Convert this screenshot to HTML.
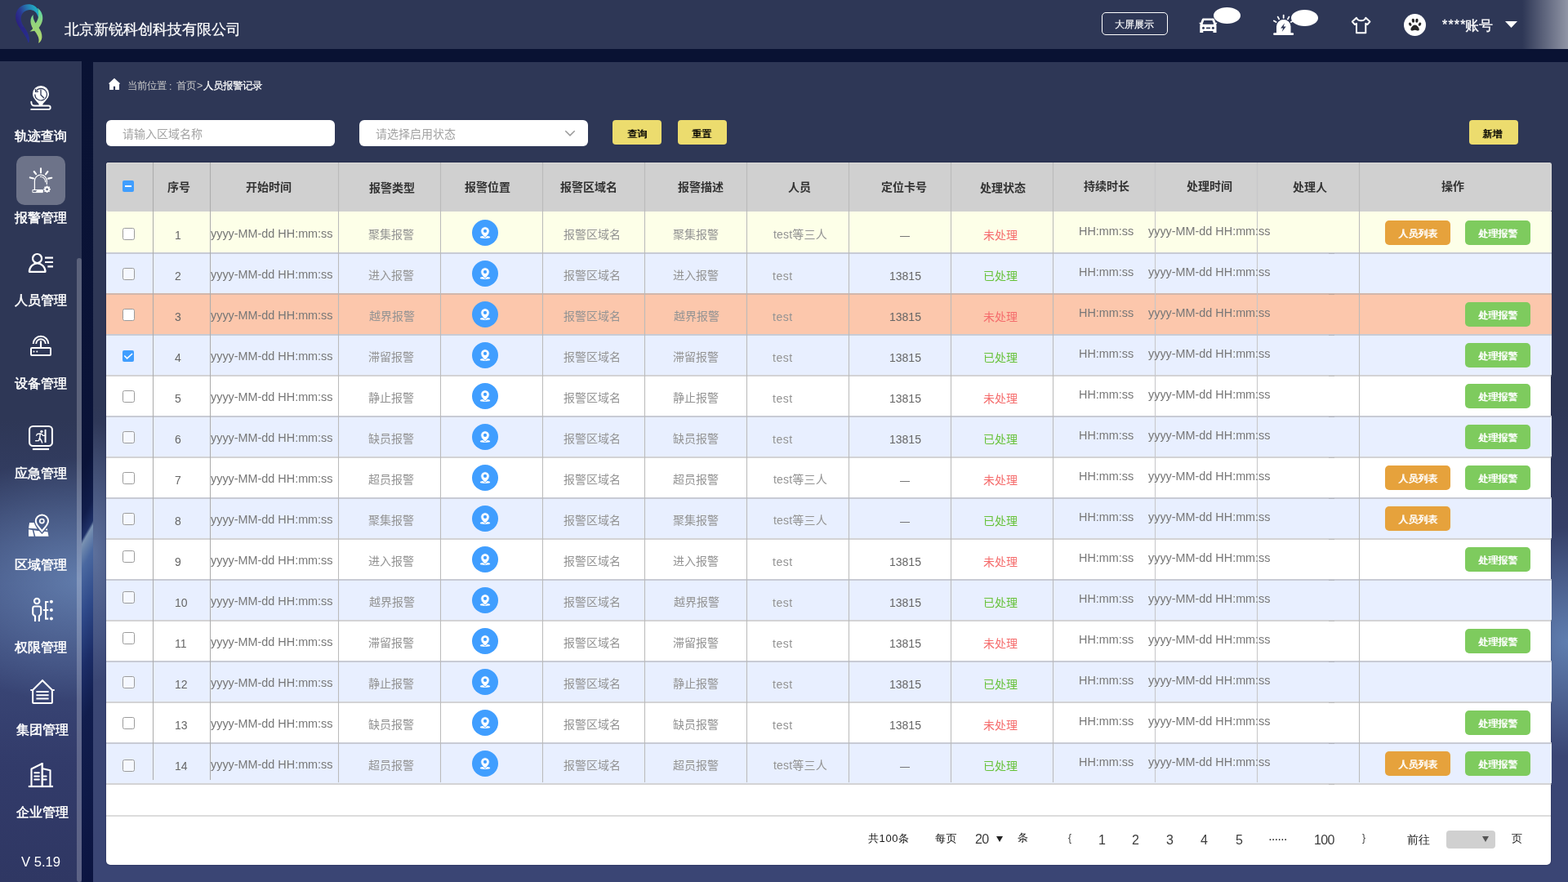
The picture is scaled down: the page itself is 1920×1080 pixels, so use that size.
<!DOCTYPE html>
<html lang="zh-CN">
<head>
<meta charset="utf-8">
<title>人员报警记录</title>
<style>
html,body{margin:0;padding:0;background:#091233;}
body{width:1920px;height:1080px;overflow:hidden;font-family:"Liberation Sans","Noto Sans CJK SC",sans-serif;}
#root{position:relative;width:1920px;height:1080px;overflow:hidden;background:#091233;will-change:transform;}
#root div,#root span,#root svg{position:absolute;box-sizing:border-box;}
.t{white-space:nowrap;}
.hdr{left:0;top:0;width:1920px;height:60px;background:#2e3756;}
.side{left:0;top:75px;width:100px;height:1005px;}
.main{left:114px;top:76px;width:1806px;height:1004px;}
.cl{width:1px;background:rgba(0,0,0,0.22);}
.row{left:130px;width:1770px;height:50px;}
.rb{left:130px;width:1770px;height:2px;}
.cb{width:15px;height:15px;border:1px solid #9b9b9b;border-radius:2.5px;background:#fff;left:150px;}
.loc{left:578px;width:32px;height:32px;}
.bo{left:1696px;width:80px;height:30px;border-radius:5px;background:#e6a23c;}
.bg{left:1794px;width:80px;height:30px;border-radius:5px;background:#7ecb5e;}
.by{top:147px;width:60px;height:30px;border-radius:4px;background:#ecdc6e;}
</style>
</head>
<body>
<div id="root">
<div style="left:100px;top:75px;width:14px;height:1005px;overflow:hidden;background:#091233"><div style="left:0;top:0;width:14px;height:1035px;transform-origin:0 0;transform:skewY(-60deg);background:linear-gradient(180deg,#091233 0,#0a1338 500px,#111d4b 560px,#1f3168 586px,#7a92b2 592px,#6a84ac 601px,#4a68a0 622px,#2f4a8a 680px,#1c2d67 745px,#111d4d 810px,#0b1440 1035px)"></div></div>
<div class="hdr"></div>
<div style="left:1864px;top:0;width:56px;height:60px;background:linear-gradient(90deg,rgba(255,255,255,0),rgba(255,255,255,.47))"></div>
<div class="side" style="background:radial-gradient(ellipse 230px 150px at 100px 635px,rgba(110,142,190,.72),rgba(110,142,190,0)),linear-gradient(180deg,#2e3756 0,#2e3756 440px,#343f66 540px,#3d4b7a 640px,#3a4777 740px,#323b6a 860px,#2f3763 1005px)"></div>
<div class="main" style="background:radial-gradient(ellipse 130px 140px at 1806px 710px,rgba(105,140,190,.8),rgba(105,140,190,0)),radial-gradient(ellipse 60px 160px at 0px 600px,rgba(120,145,190,.6),rgba(120,145,190,0)),linear-gradient(180deg,#2e3756 0,#2e3756 420px,#343e66 560px,#3a4674 700px,#3a4574 1004px)"></div>
<div style="left:94px;top:316px;width:6px;height:764px;border-radius:3px;background:rgba(255,255,255,.22)"></div>
<div style="left:20px;top:191px;width:60px;height:60px;border-radius:10px;background:rgba(255,255,255,.3)"></div>
<div style="left:1349px;top:15px;width:81px;height:28px;border:1px solid #fff;border-radius:5px"></div>
<div style="left:1485.8px;top:8.7px;width:33.4px;height:20.5px;border-radius:50%;background:#fff"></div>
<div style="left:1580.8px;top:11.7px;width:33.4px;height:20.5px;border-radius:50%;background:#fff"></div>
<div style="left:1718.8px;top:16.7px;width:27.4px;height:27.4px;border-radius:50%;background:#fff"></div>
<svg style="left:1843px;top:26px" width="15" height="8" viewBox="0 0 15 8"><path d="M0 0h15L7.5 8z" fill="#fff"/></svg>
<div style="left:130px;top:147px;width:280px;height:32px;border-radius:6px;background:#fff"></div>
<div style="left:440px;top:147px;width:280px;height:32px;border-radius:6px;background:#fff"></div>
<svg style="left:691px;top:159px" width="14" height="9" viewBox="0 0 14 9"><path d="M1.3 1.3L7 6.9l5.7-5.6" fill="none" stroke="#9a9a9a" stroke-width="1.5"/></svg>
<div class="by" style="left:750px"></div>
<div class="by" style="left:830px"></div>
<div class="by" style="left:1799px"></div>
<div style="left:130px;top:199px;width:1769px;height:860px;border-radius:3px 3px 5px 5px;background:#fff;box-shadow:0 0 2px rgba(8,12,45,.55)"></div>
<div style="left:130px;top:199px;width:1770px;height:60px;border-radius:3px 3px 2px 2px;background:#d0d0d0;border:1px solid #dadad8;border-bottom:0"></div>
<div class="row" style="top:259px;background:#fdffe8"></div>
<div class="row" style="top:309px;background:#e8efff"></div>
<div class="row" style="top:359px;background:#fcc7ac"></div>
<div class="row" style="top:409px;background:#e8efff"></div>
<div class="row" style="top:509px;background:#e8efff"></div>
<div class="row" style="top:609px;background:#e8efff"></div>
<div class="row" style="top:709px;background:#e8efff"></div>
<div class="row" style="top:809px;background:#e8efff"></div>
<div class="row" style="top:909px;background:#e8efff"></div>
<div class="rb" style="top:309px;background:rgba(168,168,172,.5)"></div>
<div style="left:1627px;top:310px;width:7px;height:1px;background:rgba(120,120,120,.25)"></div>
<div class="rb" style="top:359px;background:rgba(168,168,172,.5)"></div>
<div style="left:1627px;top:360px;width:7px;height:1px;background:rgba(120,120,120,.25)"></div>
<div class="rb" style="top:409px;background:rgba(168,168,172,.5)"></div>
<div style="left:1627px;top:410px;width:7px;height:1px;background:rgba(120,120,120,.25)"></div>
<div class="rb" style="top:459px;background:rgba(168,168,172,.5)"></div>
<div style="left:1627px;top:460px;width:7px;height:1px;background:rgba(120,120,120,.25)"></div>
<div class="rb" style="top:509px;background:rgba(168,168,172,.5)"></div>
<div style="left:1627px;top:510px;width:7px;height:1px;background:rgba(120,120,120,.25)"></div>
<div class="rb" style="top:559px;background:rgba(168,168,172,.5)"></div>
<div style="left:1627px;top:560px;width:7px;height:1px;background:rgba(120,120,120,.25)"></div>
<div class="rb" style="top:609px;background:rgba(168,168,172,.5)"></div>
<div style="left:1627px;top:610px;width:7px;height:1px;background:rgba(120,120,120,.25)"></div>
<div class="rb" style="top:659px;background:rgba(168,168,172,.5)"></div>
<div style="left:1627px;top:660px;width:7px;height:1px;background:rgba(120,120,120,.25)"></div>
<div class="rb" style="top:709px;background:rgba(168,168,172,.5)"></div>
<div style="left:1627px;top:710px;width:7px;height:1px;background:rgba(120,120,120,.25)"></div>
<div class="rb" style="top:759px;background:rgba(168,168,172,.5)"></div>
<div style="left:1627px;top:760px;width:7px;height:1px;background:rgba(120,120,120,.25)"></div>
<div class="rb" style="top:809px;background:rgba(168,168,172,.5)"></div>
<div style="left:1627px;top:810px;width:7px;height:1px;background:rgba(120,120,120,.25)"></div>
<div class="rb" style="top:859px;background:rgba(168,168,172,.5)"></div>
<div style="left:1627px;top:860px;width:7px;height:1px;background:rgba(120,120,120,.25)"></div>
<div class="rb" style="top:909px;background:rgba(168,168,172,.5)"></div>
<div style="left:1627px;top:910px;width:7px;height:1px;background:rgba(120,120,120,.25)"></div>
<div class="rb" style="top:959px;background:rgba(168,168,172,.5)"></div>
<div style="left:1627px;top:960px;width:7px;height:1px;background:rgba(120,120,120,.25)"></div>
<div style="left:130px;top:998px;width:1769px;height:2px;background:#dcdcdc"></div>
<div class="cl" style="left:187px;top:199px;height:756px;background:#adadad;box-shadow:0 0 1px rgba(0,0,0,.1)"></div>
<div class="cl" style="left:257px;top:199px;height:756px;background:#adadad;box-shadow:0 0 1px rgba(0,0,0,.1)"></div>
<div class="cl" style="left:414px;top:199px;height:759px;background:#bbbbbb;box-shadow:0 0 1px rgba(0,0,0,.1)"></div>
<div class="cl" style="left:539px;top:199px;height:759px;background:#bbbbbb;box-shadow:0 0 1px rgba(0,0,0,.1)"></div>
<div class="cl" style="left:664px;top:199px;height:759px;background:#bbbbbb;box-shadow:0 0 1px rgba(0,0,0,.1)"></div>
<div class="cl" style="left:789px;top:199px;height:759px;background:#bbbbbb;box-shadow:0 0 1px rgba(0,0,0,.1)"></div>
<div class="cl" style="left:914px;top:199px;height:759px;background:#bbbbbb;box-shadow:0 0 1px rgba(0,0,0,.1)"></div>
<div class="cl" style="left:1039px;top:199px;height:759px;background:#bbbbbb;box-shadow:0 0 1px rgba(0,0,0,.1)"></div>
<div class="cl" style="left:1164px;top:199px;height:759px;background:#bbbbbb;box-shadow:0 0 1px rgba(0,0,0,.1)"></div>
<div class="cl" style="left:1289px;top:199px;height:759px;background:#bbbbbb;box-shadow:0 0 1px rgba(0,0,0,.1)"></div>
<div class="cl" style="left:1414px;top:199px;height:759px;background:#c8c8ca;box-shadow:0 0 1px rgba(0,0,0,.1)"></div>
<div class="cl" style="left:1539px;top:199px;height:759px;background:#c8c8ca;box-shadow:0 0 1px rgba(0,0,0,.1)"></div>
<div class="cl" style="left:1664px;top:199px;height:759px;background:#bbbbbb;box-shadow:0 0 1px rgba(0,0,0,.1)"></div>
<div style="left:150px;top:221px;width:14px;height:14px;border-radius:2px;background:#409eff"></div>
<div style="left:153px;top:227px;width:8px;height:2px;background:#fff"></div>
<div class="cb" style="top:279px;background:#fff"></div>
<div class="cb" style="top:328px;background:rgba(255,255,255,.55)"></div>
<div class="cb" style="top:378px;background:#fff"></div>
<div style="left:150px;top:429px;width:14px;height:14px;border-radius:2px;background:#409eff"></div>
<svg style="left:150px;top:429px" width="14" height="14" viewBox="0 0 14 14"><path d="M2.3 6.500l3.300 3.300 6.500-5.800" fill="none" stroke="#fff" stroke-width="1.6"/></svg>
<div class="cb" style="top:478px;background:#fff"></div>
<div class="cb" style="top:528px;background:rgba(255,255,255,.55)"></div>
<div class="cb" style="top:578px;background:#fff"></div>
<div class="cb" style="top:628px;background:rgba(255,255,255,.55)"></div>
<div class="cb" style="top:674px;background:#fff"></div>
<div class="cb" style="top:724px;background:rgba(255,255,255,.55)"></div>
<div class="cb" style="top:774px;background:#fff"></div>
<div class="cb" style="top:828px;background:rgba(255,255,255,.55)"></div>
<div class="cb" style="top:878px;background:#fff"></div>
<div class="cb" style="top:930px;background:rgba(255,255,255,.55)"></div>
<svg class="loc" style="top:269px" width="32" height="32" viewBox="0 0 32 32"><circle cx="16" cy="16" r="16" fill="#409eff"/><ellipse cx="16" cy="21.4" rx="6.2" ry="1.7" fill="#fff"/><path d="M16 22.2c-1-1.2-5.3-4.6-5.3-8.2a5.3 5.3 0 0 1 10.6 0c0 3.6-4.3 7-5.3 8.2z" fill="#fff" stroke="#409eff" stroke-width=".8"/><circle cx="16" cy="13.9" r="2.1" fill="#409eff"/></svg>
<svg class="loc" style="top:319px" width="32" height="32" viewBox="0 0 32 32"><circle cx="16" cy="16" r="16" fill="#409eff"/><ellipse cx="16" cy="21.4" rx="6.2" ry="1.7" fill="#fff"/><path d="M16 22.2c-1-1.2-5.3-4.6-5.3-8.2a5.3 5.3 0 0 1 10.6 0c0 3.6-4.3 7-5.3 8.2z" fill="#fff" stroke="#409eff" stroke-width=".8"/><circle cx="16" cy="13.9" r="2.1" fill="#409eff"/></svg>
<svg class="loc" style="top:369px" width="32" height="32" viewBox="0 0 32 32"><circle cx="16" cy="16" r="16" fill="#409eff"/><ellipse cx="16" cy="21.4" rx="6.2" ry="1.7" fill="#fff"/><path d="M16 22.2c-1-1.2-5.3-4.6-5.3-8.2a5.3 5.3 0 0 1 10.6 0c0 3.6-4.3 7-5.3 8.2z" fill="#fff" stroke="#409eff" stroke-width=".8"/><circle cx="16" cy="13.9" r="2.1" fill="#409eff"/></svg>
<svg class="loc" style="top:419px" width="32" height="32" viewBox="0 0 32 32"><circle cx="16" cy="16" r="16" fill="#409eff"/><ellipse cx="16" cy="21.4" rx="6.2" ry="1.7" fill="#fff"/><path d="M16 22.2c-1-1.2-5.3-4.6-5.3-8.2a5.3 5.3 0 0 1 10.6 0c0 3.6-4.3 7-5.3 8.2z" fill="#fff" stroke="#409eff" stroke-width=".8"/><circle cx="16" cy="13.9" r="2.1" fill="#409eff"/></svg>
<svg class="loc" style="top:469px" width="32" height="32" viewBox="0 0 32 32"><circle cx="16" cy="16" r="16" fill="#409eff"/><ellipse cx="16" cy="21.4" rx="6.2" ry="1.7" fill="#fff"/><path d="M16 22.2c-1-1.2-5.3-4.6-5.3-8.2a5.3 5.3 0 0 1 10.6 0c0 3.6-4.3 7-5.3 8.2z" fill="#fff" stroke="#409eff" stroke-width=".8"/><circle cx="16" cy="13.9" r="2.1" fill="#409eff"/></svg>
<svg class="loc" style="top:519px" width="32" height="32" viewBox="0 0 32 32"><circle cx="16" cy="16" r="16" fill="#409eff"/><ellipse cx="16" cy="21.4" rx="6.2" ry="1.7" fill="#fff"/><path d="M16 22.2c-1-1.2-5.3-4.6-5.3-8.2a5.3 5.3 0 0 1 10.6 0c0 3.6-4.3 7-5.3 8.2z" fill="#fff" stroke="#409eff" stroke-width=".8"/><circle cx="16" cy="13.9" r="2.1" fill="#409eff"/></svg>
<svg class="loc" style="top:569px" width="32" height="32" viewBox="0 0 32 32"><circle cx="16" cy="16" r="16" fill="#409eff"/><ellipse cx="16" cy="21.4" rx="6.2" ry="1.7" fill="#fff"/><path d="M16 22.2c-1-1.2-5.3-4.6-5.3-8.2a5.3 5.3 0 0 1 10.6 0c0 3.6-4.3 7-5.3 8.2z" fill="#fff" stroke="#409eff" stroke-width=".8"/><circle cx="16" cy="13.9" r="2.1" fill="#409eff"/></svg>
<svg class="loc" style="top:619px" width="32" height="32" viewBox="0 0 32 32"><circle cx="16" cy="16" r="16" fill="#409eff"/><ellipse cx="16" cy="21.4" rx="6.2" ry="1.7" fill="#fff"/><path d="M16 22.2c-1-1.2-5.3-4.6-5.3-8.2a5.3 5.3 0 0 1 10.6 0c0 3.6-4.3 7-5.3 8.2z" fill="#fff" stroke="#409eff" stroke-width=".8"/><circle cx="16" cy="13.9" r="2.1" fill="#409eff"/></svg>
<svg class="loc" style="top:669px" width="32" height="32" viewBox="0 0 32 32"><circle cx="16" cy="16" r="16" fill="#409eff"/><ellipse cx="16" cy="21.4" rx="6.2" ry="1.7" fill="#fff"/><path d="M16 22.2c-1-1.2-5.3-4.6-5.3-8.2a5.3 5.3 0 0 1 10.6 0c0 3.6-4.3 7-5.3 8.2z" fill="#fff" stroke="#409eff" stroke-width=".8"/><circle cx="16" cy="13.9" r="2.1" fill="#409eff"/></svg>
<svg class="loc" style="top:719px" width="32" height="32" viewBox="0 0 32 32"><circle cx="16" cy="16" r="16" fill="#409eff"/><ellipse cx="16" cy="21.4" rx="6.2" ry="1.7" fill="#fff"/><path d="M16 22.2c-1-1.2-5.3-4.6-5.3-8.2a5.3 5.3 0 0 1 10.6 0c0 3.6-4.3 7-5.3 8.2z" fill="#fff" stroke="#409eff" stroke-width=".8"/><circle cx="16" cy="13.9" r="2.1" fill="#409eff"/></svg>
<svg class="loc" style="top:769px" width="32" height="32" viewBox="0 0 32 32"><circle cx="16" cy="16" r="16" fill="#409eff"/><ellipse cx="16" cy="21.4" rx="6.2" ry="1.7" fill="#fff"/><path d="M16 22.2c-1-1.2-5.3-4.6-5.3-8.2a5.3 5.3 0 0 1 10.6 0c0 3.6-4.3 7-5.3 8.2z" fill="#fff" stroke="#409eff" stroke-width=".8"/><circle cx="16" cy="13.9" r="2.1" fill="#409eff"/></svg>
<svg class="loc" style="top:819px" width="32" height="32" viewBox="0 0 32 32"><circle cx="16" cy="16" r="16" fill="#409eff"/><ellipse cx="16" cy="21.4" rx="6.2" ry="1.7" fill="#fff"/><path d="M16 22.2c-1-1.2-5.3-4.6-5.3-8.2a5.3 5.3 0 0 1 10.6 0c0 3.6-4.3 7-5.3 8.2z" fill="#fff" stroke="#409eff" stroke-width=".8"/><circle cx="16" cy="13.9" r="2.1" fill="#409eff"/></svg>
<svg class="loc" style="top:869px" width="32" height="32" viewBox="0 0 32 32"><circle cx="16" cy="16" r="16" fill="#409eff"/><ellipse cx="16" cy="21.4" rx="6.2" ry="1.7" fill="#fff"/><path d="M16 22.2c-1-1.2-5.3-4.6-5.3-8.2a5.3 5.3 0 0 1 10.6 0c0 3.6-4.3 7-5.3 8.2z" fill="#fff" stroke="#409eff" stroke-width=".8"/><circle cx="16" cy="13.9" r="2.1" fill="#409eff"/></svg>
<svg class="loc" style="top:919px" width="32" height="32" viewBox="0 0 32 32"><circle cx="16" cy="16" r="16" fill="#409eff"/><ellipse cx="16" cy="21.4" rx="6.2" ry="1.7" fill="#fff"/><path d="M16 22.2c-1-1.2-5.3-4.6-5.3-8.2a5.3 5.3 0 0 1 10.6 0c0 3.6-4.3 7-5.3 8.2z" fill="#fff" stroke="#409eff" stroke-width=".8"/><circle cx="16" cy="13.9" r="2.1" fill="#409eff"/></svg>
<div class="bo" style="top:270px"></div>
<div class="bg" style="top:270px"></div>
<div class="bg" style="top:370px"></div>
<div class="bg" style="top:420px"></div>
<div class="bg" style="top:470px"></div>
<div class="bg" style="top:520px"></div>
<div class="bo" style="top:570px"></div>
<div class="bg" style="top:570px"></div>
<div class="bo" style="top:620px"></div>
<div class="bg" style="top:670px"></div>
<div class="bg" style="top:770px"></div>
<div class="bg" style="top:870px"></div>
<div class="bo" style="top:920px"></div>
<div class="bg" style="top:920px"></div>
<svg style="left:1220px;top:1024px" width="8" height="7" viewBox="0 0 8 7"><path d="M0 0h8L4 7z" fill="#222"/></svg>
<div style="left:1771px;top:1017px;width:60px;height:22px;border-radius:4px;background:#d0d0d0"></div>
<svg style="left:1814.5px;top:1024px" width="8" height="7" viewBox="0 0 8 7"><path d="M0 0h8L4 7z" fill="#555"/></svg>
<svg style="left:0;top:0" width="1920" height="1080" viewBox="0 0 1920 1080"><defs>
<linearGradient id="lgB" gradientUnits="userSpaceOnUse" x1="19" y1="24" x2="47" y2="12"><stop offset="0" stop-color="#2a1f80"/><stop offset=".3" stop-color="#2b3791"/><stop offset=".62" stop-color="#2678b0"/><stop offset="1" stop-color="#1fb6c8"/></linearGradient>
<linearGradient id="lgB2" gradientUnits="userSpaceOnUse" x1="22" y1="30" x2="36" y2="52"><stop offset="0" stop-color="#2a2384"/><stop offset="1" stop-color="#26308e"/></linearGradient>
<linearGradient id="lgG" gradientUnits="userSpaceOnUse" x1="48" y1="10" x2="44" y2="52"><stop offset="0" stop-color="#4fd6ad"/><stop offset=".4" stop-color="#8fd47e"/><stop offset="1" stop-color="#b4d86c"/></linearGradient>
</defs><path d="M34.6 52.6C33.5 46.5 29 41 24.5 34.5C20 28.5 18.2 22 19.6 16.5C21.5 9.5 27.5 5.4 34.5 5.3C40.5 5.3 45 8 46.5 12.5C47.4 15.5 47.3 18.5 46.8 21.2C45.6 16.5 43 13 38.5 12.2C32.5 11.2 26.8 14.8 25.8 21C25.2 26 27.8 30.5 30.8 35C34 40 36.4 45.5 35.6 51Z" fill="url(#lgB)"/><path d="M34.6 52.6C33.5 46.5 29 41 24.5 34.5L29 32.5C30 34 30.4 34.4 30.8 35C34 40 36.4 45.5 35.6 51Z" fill="url(#lgB2)"/><path d="M45.8 9.8C50 12.5 52.8 18 52.2 23.5C51.8 27.5 49.8 31 47.6 34C50 37.5 51.6 41.5 51.4 45.5C51.2 49 49.4 51.6 47 52.8C48.2 50 47.6 46.5 46 43.5C44.8 41.2 43.6 39.4 42.2 37.8C40.4 38.2 38.4 38.7 36.4 38.6C37.8 37.6 39.2 36.4 40.2 35C38.2 31.5 37 27.5 37.6 24C38 21.5 39.2 19.3 40.8 18C40.4 20 40.6 22 41.4 24C42 25.6 42.8 27.2 43.6 28.6C45.2 26.4 46.6 23.5 47 20.5C47.4 16.8 47 13 45.8 9.8Z" fill="url(#lgG)"/><path d="M1473.6 22.5h11.6c.8 0 1.5.5 1.8 1.3l1.5 4h1.9l-.6 1.7h-.9c.4.5.6 1.2.6 1.9v8.700h-4v-2.100h-12.200v2.100h-4v-8.700c0-.7.2-1.400.6-1.900h-.9l-.6-1.700h1.900l1.500-4c.3-.8 1-1.300 1.800-1.300z" fill="#fff"/><path d="M1474.300 24.900h10.200l1.600 4.200c.1.300-.1.600-.4.600h-12.600c-.3 0-.5-.3-.4-.6z" fill="#2e3756"/><circle cx="1473.500" cy="34.300" r="1.500" fill="#2e3756"/><circle cx="1485.400" cy="34.300" r="1.500" fill="#2e3756"/><rect x="1477" y="33.400" width="5" height="1.800" rx=".6" fill="#2e3756"/><path d="M1563 40.300v-8a8.700 8.300 0 0 1 17.500 0v8h2.300a1.400 1.400 0 0 1 0 2.800h-22.300a1.400 1.400 0 0 1 0-2.800z" fill="#fff"/><path d="M1573 28.300l-4.900 6.200h3l-1.400 4.600 5-6.500h-3z" fill="#2e3756"/><g stroke="#fff" stroke-width="1.800" stroke-linecap="round"><path d="M1571.700 18.600v3.300M1564.700 20.600l1.500 2.800M1578.400 20.600l-1.500 2.800M1559.900 25.400l2.700 1.700M1583.300 25.600l-2.500 1.500"/></g><path d="M1661 21.800l-5.100 4.800 3.100 3.400 2-1.200v11.400h11.300v-11.400l2 1.200 3.100-3.400-5.100-4.800c-1 2.300-3.200 3.500-5.600 3.500s-4.700-1.200-5.700-3.500z" fill="none" stroke="#fff" stroke-width="2" stroke-linejoin="round"/><g fill="#262626"><ellipse cx="1730.400" cy="25.300" rx="1.700" ry="2.500" transform="rotate(-8 1730.400 25.300)"/><ellipse cx="1734.900" cy="25.300" rx="1.700" ry="2.500" transform="rotate(8 1734.900 25.300)"/><ellipse cx="1726.700" cy="29.700" rx="1.600" ry="2.200" transform="rotate(-30 1726.700 29.700)"/><ellipse cx="1738.500" cy="29.700" rx="1.600" ry="2.200" transform="rotate(30 1738.500 29.700)"/><path d="M1732.600 30.400c2.500 0 5.200 3.500 5.200 5.500 0 1.400-1.300 1.900-2.500 1.500-1.100-.3-1.800-.6-2.700-.6s-1.600.3-2.700.6c-1.200.4-2.500-.1-2.500-1.500 0-2 2.700-5.500 5.200-5.500z"/></g><path d="M140 95.700l7.100 6.600-1.100.6v7h-4.900v-4.200h-2.200v4.200h-4.800v-7l-1.100-.6z" fill="#fff"/><path d="M50 104.900a10 10 0 0 1 10 10c0 4.500-3.600 7.700-7.400 12l-.6 2.300h-4l-.6-2.300c-3.800-4.300-7.400-7.500-7.400-12a10 10 0 0 1 10-10z" fill="#fff"/><g fill="none" stroke="#2e3756" stroke-width="1.150"><path d="M44.300 111.200a7.300 7.300 0 1 1-1.500 4.200"/><path d="M43.300 108.900l.2 3.500 3.500-.3"/><path d="M50 109.900v6.300l3.600 3.500" stroke-width="1.300" stroke-linecap="round" stroke-linejoin="round"/></g><path d="M38.300 124.700c0 2.900 1.600 4.800 4.200 4.800h17a2.200 2.200 0 0 1 0 4.400h-21.300" fill="none" stroke="#fff" stroke-width="1.900" stroke-linecap="round"/><g fill="none" stroke="#fff" stroke-linecap="round"><path d="M42.400 232.200v-10.600a7.450 7.450 0 0 1 14.900 0v3.800" stroke-width="1.250"/><path d="M49.400 216.500c3.400-.2 6.100 2.500 6.200 6.200" stroke-width="1.100"/><path d="M40.300 232.500h12v3.100h-12z" stroke-width="1" stroke-linejoin="round"/><path d="M50 206.300v5.200M41.700 210l2.400 3.200M58.400 210.100l-2.400 3.200M36.800 217.400l4.200 1.100M63.300 217.700l-4.200 .9" stroke-width="2.100"/></g><path d="M45.300 232.900h7v2.700h-8.800z" fill="#fff"/><circle cx="57.600" cy="231.700" r="2.450" fill="none" stroke="#fff" stroke-width="1.800"/><g stroke="#fff" stroke-width="1.500"><path d="M57.600 227.400v1.400M57.600 234.600v1.400M53.300 231.700h1.400M60.500 231.700h1.400M54.560 228.660l1 1M59.640 233.740l1 1M54.560 234.740l1-1M59.640 229.660l1-1"/></g><g fill="none" stroke="#fff" stroke-width="2.200"><circle cx="45.550" cy="316.500" r="5.500"/><path d="M35.900 332.800a9.800 10.300 0 0 1 19.600 0z" stroke-linejoin="round"/><path d="M55 315.600h10M55 321h10M58.300 326.300h6.700"/></g><g fill="none" stroke="#fff" stroke-width="2"><rect x="38" y="426" width="24" height="9" rx="1"/><path d="M50 426v-8.600" stroke-width="2.200"/><path d="M40.700 421a9.300 9.300 0 0 1 18.600 0"/><path d="M44.200 421a5.800 5.800 0 0 1 11.600 0"/></g><circle cx="41.500" cy="430.500" r="1" fill="#fff"/><circle cx="45.300" cy="430.500" r="1" fill="#fff"/><g fill="none" stroke="#fff" stroke-width="2.100"><rect x="36.050" y="521.950" width="27.900" height="24" rx="4.200"/><path d="M39.900 550h20.200" stroke-width="2.200"/><path d="M55.550 525.900v16" stroke-width="2"/></g><circle cx="50.900" cy="528.300" r="1.600" fill="#fff"/><path d="M44.600 533.200l.9-1.700 3.700-.5 1.600.3 1.800 2 2.600 0" fill="none" stroke="#fff" stroke-width="1.300" stroke-linecap="round" stroke-linejoin="round"/><path d="M49.400 531.400l-.8 5.100 2 3 1 2.500M48.500 536.400l-1 3.200-3.800 .1" fill="none" stroke="#fff" stroke-width="1.500" stroke-linecap="round" stroke-linejoin="round"/><path d="M36.100 640h5.600c.8 2.600 2.300 5.200 4.100 7.600l-10.800-.9zM35 648.300l4.700 .7 2 7.800h-6.700zM41.300 649.200l6.700 1 3.400 3.800 3.100-3.200 4 .4 1 5.600h-16.200zM57.300 646.800l1 2.700-2.600-.3z" fill="#fff"/><path d="M51.400 650.300c-2.600-3.400-7.600-7.600-7.600-12.200a7.600 7.600 0 0 1 15.200 0c0 4.600-5 8.800-7.600 12.200z" fill="none" stroke="#fff" stroke-width="2"/><circle cx="51.300" cy="638.100" r="2.600" fill="none" stroke="#fff" stroke-width="1.700"/><g fill="none" stroke="#fff" stroke-width="2.100"><circle cx="45.200" cy="736.050" r="3.200"/><path d="M43 760.900v-6.500l-1.700-1.300c-.7-.5-1.100-1.300-1.100-2.200v-6c0-1.300 1.100-2.400 2.400-2.400h5.200c1.300 0 2.400 1.100 2.400 2.400v6c0 .9-.4 1.700-1.100 2.200l-1.200 1.300v6.500" stroke-linejoin="round"/><path d="M59.300 737h-3.200v20.600h3.200M52.800 747h6.500" stroke-width="2.100"/></g><circle cx="62.900" cy="736.700" r="2" fill="#fff"/><circle cx="62.900" cy="747" r="2" fill="#fff"/><circle cx="62.900" cy="757.600" r="2" fill="#fff"/><g fill="none" stroke="#fff" stroke-width="2.100"><path d="M37.300 845h2.800l11.900-11.700 11.900 11.700h2.800" stroke-linejoin="miter" stroke-miterlimit="3"/><path d="M40.100 845v15c0 .6.400 1 1 1h21.800c.6 0 1-.4 1-1v-15"/><path d="M44.400 847h15.200M44.400 851.300h15.200M44.400 855.500h15.200" stroke-width="2"/></g><g fill="none" stroke="#fff" stroke-width="2.100"><path d="M34.800 963h30.200" stroke-width="2.200"/><path d="M38.500 962v-20.500l13.200-6.500" stroke-linejoin="round"/><path d="M51.700 934v28" stroke-width="2.400"/><path d="M52.500 941.200l9 2.100v18.700" stroke-linejoin="round"/><path d="M42.300 946.200h5.600M42.300 950.400h5.600M42.300 954.600h5.600M53.500 950.400h3.200M53.500 954.600h3.200" stroke-width="2" stroke-linecap="round"/></g></svg>
<span class="t" style="left:79px;top:24px;font-family:'Liberation Sans','WenQuanYi Zen Hei',sans-serif;font-size:18px;color:#fff;-webkit-text-stroke:.2px currentColor;">北京新锐科创科技有限公司</span>
<span class="t" style="left:1365px;top:22px;font-family:'Liberation Sans','WenQuanYi Zen Hei',sans-serif;font-size:12px;color:#fff;-webkit-text-stroke:.15px currentColor;">大屏展示</span>
<span class="t" style="left:1766px;top:22px;font-family:'Liberation Sans','WenQuanYi Zen Hei',sans-serif;font-size:16px;color:#fff;letter-spacing:1.2px;-webkit-text-stroke:.3px currentColor;">****</span>
<span class="t" style="left:1794px;top:20px;font-family:'Liberation Sans','WenQuanYi Zen Hei',sans-serif;font-size:17px;color:#fff;-webkit-text-stroke:.3px currentColor;">账号</span>
<span class="t" style="left:18px;top:157px;font-family:'Liberation Sans','WenQuanYi Zen Hei',sans-serif;font-size:16px;-webkit-text-stroke:.5px currentColor;color:#fff;">轨迹查询</span>
<span class="t" style="left:18px;top:257px;font-family:'Liberation Sans','WenQuanYi Zen Hei',sans-serif;font-size:16px;-webkit-text-stroke:.5px currentColor;color:#fff;">报警管理</span>
<span class="t" style="left:18px;top:358px;font-family:'Liberation Sans','WenQuanYi Zen Hei',sans-serif;font-size:16px;-webkit-text-stroke:.5px currentColor;color:#fff;">人员管理</span>
<span class="t" style="left:18px;top:460px;font-family:'Liberation Sans','WenQuanYi Zen Hei',sans-serif;font-size:16px;-webkit-text-stroke:.5px currentColor;color:#fff;">设备管理</span>
<span class="t" style="left:18px;top:570px;font-family:'Liberation Sans','WenQuanYi Zen Hei',sans-serif;font-size:16px;-webkit-text-stroke:.5px currentColor;color:#fff;">应急管理</span>
<span class="t" style="left:18px;top:682px;font-family:'Liberation Sans','WenQuanYi Zen Hei',sans-serif;font-size:16px;-webkit-text-stroke:.5px currentColor;color:#fff;">区域管理</span>
<span class="t" style="left:18px;top:783px;font-family:'Liberation Sans','WenQuanYi Zen Hei',sans-serif;font-size:16px;-webkit-text-stroke:.5px currentColor;color:#fff;">权限管理</span>
<span class="t" style="left:20px;top:884px;font-family:'Liberation Sans','WenQuanYi Zen Hei',sans-serif;font-size:16px;-webkit-text-stroke:.5px currentColor;color:#fff;">集团管理</span>
<span class="t" style="left:20px;top:985px;font-family:'Liberation Sans','WenQuanYi Zen Hei',sans-serif;font-size:16px;-webkit-text-stroke:.5px currentColor;color:#fff;">企业管理</span>
<span class="t" style="left:26px;top:1046px;font-family:'Liberation Sans',sans-serif;font-size:16.6px;color:#fff;">V 5.19</span>
<span class="t" style="left:156px;top:97px;font-family:'Liberation Sans','WenQuanYi Zen Hei',sans-serif;font-size:12.5px;letter-spacing:-.5px;color:#c9c9c9;">当前位置</span>
<span class="t" style="left:207px;top:99px;font-family:'Liberation Sans','WenQuanYi Zen Hei',sans-serif;font-size:12.5px;letter-spacing:-.5px;color:#c9c9c9;">:</span>
<span class="t" style="left:216px;top:97px;font-family:'Liberation Sans','WenQuanYi Zen Hei',sans-serif;font-size:12.5px;letter-spacing:-.5px;color:#c9c9c9;">首页</span>
<span class="t" style="left:241px;top:98px;font-family:'Liberation Sans','WenQuanYi Zen Hei',sans-serif;font-size:12.5px;letter-spacing:-.5px;color:#c9c9c9;">&gt;</span>
<span class="t" style="left:249px;top:97px;font-family:'Liberation Sans','WenQuanYi Zen Hei',sans-serif;font-size:12.5px;letter-spacing:-.5px;color:#fff;-webkit-text-stroke:.2px currentColor;">人员报警记录</span>
<span class="t" style="left:150px;top:153px;font-family:'Liberation Sans','Noto Sans CJK SC',sans-serif;font-size:14px;color:#a3a3a3;">请输入区域名称</span>
<span class="t" style="left:460px;top:153px;font-family:'Liberation Sans','Noto Sans CJK SC',sans-serif;font-size:14px;color:#a3a3a3;">请选择启用状态</span>
<span class="t" style="left:768px;top:156px;font-family:'Liberation Sans','WenQuanYi Zen Hei',sans-serif;font-size:12px;text-shadow:1px 0 0 currentColor;color:#000;">查询</span>
<span class="t" style="left:847px;top:156px;font-family:'Liberation Sans','WenQuanYi Zen Hei',sans-serif;font-size:12px;text-shadow:1px 0 0 currentColor;color:#000;">重置</span>
<span class="t" style="left:1815px;top:156px;font-family:'Liberation Sans','WenQuanYi Zen Hei',sans-serif;font-size:12px;text-shadow:1px 0 0 currentColor;color:#000;">新增</span>
<span class="t" style="left:205px;top:218px;font-family:'Liberation Sans','Noto Sans CJK SC',sans-serif;font-size:14px;font-weight:bold;color:#333;">序号</span>
<span class="t" style="left:301px;top:218px;font-family:'Liberation Sans','Noto Sans CJK SC',sans-serif;font-size:14px;font-weight:bold;color:#333;">开始时间</span>
<span class="t" style="left:452px;top:219px;font-family:'Liberation Sans','Noto Sans CJK SC',sans-serif;font-size:14px;font-weight:bold;color:#333;">报警类型</span>
<span class="t" style="left:569px;top:218px;font-family:'Liberation Sans','Noto Sans CJK SC',sans-serif;font-size:14px;font-weight:bold;color:#333;">报警位置</span>
<span class="t" style="left:686px;top:218px;font-family:'Liberation Sans','Noto Sans CJK SC',sans-serif;font-size:14px;font-weight:bold;color:#333;">报警区域名</span>
<span class="t" style="left:830px;top:218px;font-family:'Liberation Sans','Noto Sans CJK SC',sans-serif;font-size:14px;font-weight:bold;color:#333;">报警描述</span>
<span class="t" style="left:965px;top:218px;font-family:'Liberation Sans','Noto Sans CJK SC',sans-serif;font-size:14px;font-weight:bold;color:#333;">人员</span>
<span class="t" style="left:1079px;top:218px;font-family:'Liberation Sans','Noto Sans CJK SC',sans-serif;font-size:14px;font-weight:bold;color:#333;">定位卡号</span>
<span class="t" style="left:1200px;top:219px;font-family:'Liberation Sans','Noto Sans CJK SC',sans-serif;font-size:14px;font-weight:bold;color:#333;">处理状态</span>
<span class="t" style="left:1327px;top:217px;font-family:'Liberation Sans','Noto Sans CJK SC',sans-serif;font-size:14px;font-weight:bold;color:#333;">持续时长</span>
<span class="t" style="left:1453px;top:217px;font-family:'Liberation Sans','Noto Sans CJK SC',sans-serif;font-size:14px;font-weight:bold;color:#333;">处理时间</span>
<span class="t" style="left:1583px;top:218px;font-family:'Liberation Sans','Noto Sans CJK SC',sans-serif;font-size:14px;font-weight:bold;color:#333;">处理人</span>
<span class="t" style="left:1765px;top:217px;font-family:'Liberation Sans','Noto Sans CJK SC',sans-serif;font-size:14px;font-weight:bold;color:#333;">操作</span>
<span class="t" style="left:214px;top:280px;font-family:'Liberation Sans','Noto Sans CJK SC',sans-serif;font-size:14px;color:#666;">1</span>
<span class="t" style="left:258px;top:278px;font-family:'Liberation Sans',sans-serif;font-size:14.4px;color:#777;">yyyy-MM-dd HH:mm:ss</span>
<span class="t" style="left:451px;top:276px;font-family:'Liberation Sans','Noto Sans CJK SC',sans-serif;font-size:14px;color:#939393;">聚集报警</span>
<span class="t" style="left:690px;top:276px;font-family:'Liberation Sans','Noto Sans CJK SC',sans-serif;font-size:14px;color:#939393;">报警区域名</span>
<span class="t" style="left:824px;top:276px;font-family:'Liberation Sans','Noto Sans CJK SC',sans-serif;font-size:14px;color:#939393;">聚集报警</span>
<span class="t" style="left:947px;top:276px;font-family:'Liberation Sans','Noto Sans CJK SC',sans-serif;font-size:14px;color:#939393;letter-spacing:.2px;">test等三人</span>
<span class="t" style="left:1102px;top:282px;font-family:'Liberation Sans',sans-serif;font-size:12px;color:#666;">—</span>
<span class="t" style="left:1204px;top:277px;font-family:'Liberation Sans','Noto Sans CJK SC',sans-serif;font-size:14px;color:#f56c6c;">未处理</span>
<span class="t" style="left:1321px;top:275px;font-family:'Liberation Sans',sans-serif;font-size:14.4px;color:#777;">HH:mm:ss</span>
<span class="t" style="left:1406px;top:275px;font-family:'Liberation Sans',sans-serif;font-size:14.4px;color:#777;">yyyy-MM-dd HH:mm:ss</span>
<span class="t" style="left:1712px;top:278px;font-family:'Liberation Sans','WenQuanYi Zen Hei',sans-serif;font-size:12px;text-shadow:1px 0 0 currentColor;color:#fff;">人员列表</span>
<span class="t" style="left:1810px;top:278px;font-family:'Liberation Sans','WenQuanYi Zen Hei',sans-serif;font-size:12px;text-shadow:1px 0 0 currentColor;color:#fff;">处理报警</span>
<span class="t" style="left:214px;top:330px;font-family:'Liberation Sans','Noto Sans CJK SC',sans-serif;font-size:14px;color:#666;">2</span>
<span class="t" style="left:258px;top:328px;font-family:'Liberation Sans',sans-serif;font-size:14.4px;color:#777;">yyyy-MM-dd HH:mm:ss</span>
<span class="t" style="left:451px;top:326px;font-family:'Liberation Sans','Noto Sans CJK SC',sans-serif;font-size:14px;color:#939393;">进入报警</span>
<span class="t" style="left:690px;top:326px;font-family:'Liberation Sans','Noto Sans CJK SC',sans-serif;font-size:14px;color:#939393;">报警区域名</span>
<span class="t" style="left:824px;top:326px;font-family:'Liberation Sans','Noto Sans CJK SC',sans-serif;font-size:14px;color:#939393;">进入报警</span>
<span class="t" style="left:946px;top:330px;font-family:'Liberation Sans','Noto Sans CJK SC',sans-serif;font-size:14px;color:#939393;letter-spacing:.5px;">test</span>
<span class="t" style="left:1089px;top:330px;font-family:'Liberation Sans','Noto Sans CJK SC',sans-serif;font-size:14px;color:#666;">13815</span>
<span class="t" style="left:1204px;top:327px;font-family:'Liberation Sans','Noto Sans CJK SC',sans-serif;font-size:14px;color:#67c23a;">已处理</span>
<span class="t" style="left:1321px;top:325px;font-family:'Liberation Sans',sans-serif;font-size:14.4px;color:#777;">HH:mm:ss</span>
<span class="t" style="left:1406px;top:325px;font-family:'Liberation Sans',sans-serif;font-size:14.4px;color:#777;">yyyy-MM-dd HH:mm:ss</span>
<span class="t" style="left:214px;top:380px;font-family:'Liberation Sans','Noto Sans CJK SC',sans-serif;font-size:14px;color:#666;">3</span>
<span class="t" style="left:258px;top:378px;font-family:'Liberation Sans',sans-serif;font-size:14.4px;color:#777;">yyyy-MM-dd HH:mm:ss</span>
<span class="t" style="left:452px;top:376px;font-family:'Liberation Sans','Noto Sans CJK SC',sans-serif;font-size:14px;color:#939393;">越界报警</span>
<span class="t" style="left:690px;top:376px;font-family:'Liberation Sans','Noto Sans CJK SC',sans-serif;font-size:14px;color:#939393;">报警区域名</span>
<span class="t" style="left:825px;top:376px;font-family:'Liberation Sans','Noto Sans CJK SC',sans-serif;font-size:14px;color:#939393;">越界报警</span>
<span class="t" style="left:946px;top:380px;font-family:'Liberation Sans','Noto Sans CJK SC',sans-serif;font-size:14px;color:#939393;letter-spacing:.5px;">test</span>
<span class="t" style="left:1089px;top:380px;font-family:'Liberation Sans','Noto Sans CJK SC',sans-serif;font-size:14px;color:#666;">13815</span>
<span class="t" style="left:1204px;top:377px;font-family:'Liberation Sans','Noto Sans CJK SC',sans-serif;font-size:14px;color:#f56c6c;">未处理</span>
<span class="t" style="left:1321px;top:375px;font-family:'Liberation Sans',sans-serif;font-size:14.4px;color:#777;">HH:mm:ss</span>
<span class="t" style="left:1406px;top:375px;font-family:'Liberation Sans',sans-serif;font-size:14.4px;color:#777;">yyyy-MM-dd HH:mm:ss</span>
<span class="t" style="left:1810px;top:378px;font-family:'Liberation Sans','WenQuanYi Zen Hei',sans-serif;font-size:12px;text-shadow:1px 0 0 currentColor;color:#fff;">处理报警</span>
<span class="t" style="left:214px;top:430px;font-family:'Liberation Sans','Noto Sans CJK SC',sans-serif;font-size:14px;color:#666;">4</span>
<span class="t" style="left:258px;top:428px;font-family:'Liberation Sans',sans-serif;font-size:14.4px;color:#777;">yyyy-MM-dd HH:mm:ss</span>
<span class="t" style="left:451px;top:426px;font-family:'Liberation Sans','Noto Sans CJK SC',sans-serif;font-size:14px;color:#939393;">滞留报警</span>
<span class="t" style="left:690px;top:426px;font-family:'Liberation Sans','Noto Sans CJK SC',sans-serif;font-size:14px;color:#939393;">报警区域名</span>
<span class="t" style="left:824px;top:426px;font-family:'Liberation Sans','Noto Sans CJK SC',sans-serif;font-size:14px;color:#939393;">滞留报警</span>
<span class="t" style="left:946px;top:430px;font-family:'Liberation Sans','Noto Sans CJK SC',sans-serif;font-size:14px;color:#939393;letter-spacing:.5px;">test</span>
<span class="t" style="left:1089px;top:430px;font-family:'Liberation Sans','Noto Sans CJK SC',sans-serif;font-size:14px;color:#666;">13815</span>
<span class="t" style="left:1204px;top:427px;font-family:'Liberation Sans','Noto Sans CJK SC',sans-serif;font-size:14px;color:#67c23a;">已处理</span>
<span class="t" style="left:1321px;top:425px;font-family:'Liberation Sans',sans-serif;font-size:14.4px;color:#777;">HH:mm:ss</span>
<span class="t" style="left:1406px;top:425px;font-family:'Liberation Sans',sans-serif;font-size:14.4px;color:#777;">yyyy-MM-dd HH:mm:ss</span>
<span class="t" style="left:1810px;top:428px;font-family:'Liberation Sans','WenQuanYi Zen Hei',sans-serif;font-size:12px;text-shadow:1px 0 0 currentColor;color:#fff;">处理报警</span>
<span class="t" style="left:214px;top:480px;font-family:'Liberation Sans','Noto Sans CJK SC',sans-serif;font-size:14px;color:#666;">5</span>
<span class="t" style="left:258px;top:478px;font-family:'Liberation Sans',sans-serif;font-size:14.4px;color:#777;">yyyy-MM-dd HH:mm:ss</span>
<span class="t" style="left:451px;top:476px;font-family:'Liberation Sans','Noto Sans CJK SC',sans-serif;font-size:14px;color:#939393;">静止报警</span>
<span class="t" style="left:690px;top:476px;font-family:'Liberation Sans','Noto Sans CJK SC',sans-serif;font-size:14px;color:#939393;">报警区域名</span>
<span class="t" style="left:824px;top:476px;font-family:'Liberation Sans','Noto Sans CJK SC',sans-serif;font-size:14px;color:#939393;">静止报警</span>
<span class="t" style="left:946px;top:480px;font-family:'Liberation Sans','Noto Sans CJK SC',sans-serif;font-size:14px;color:#939393;letter-spacing:.5px;">test</span>
<span class="t" style="left:1089px;top:480px;font-family:'Liberation Sans','Noto Sans CJK SC',sans-serif;font-size:14px;color:#666;">13815</span>
<span class="t" style="left:1204px;top:477px;font-family:'Liberation Sans','Noto Sans CJK SC',sans-serif;font-size:14px;color:#f56c6c;">未处理</span>
<span class="t" style="left:1321px;top:475px;font-family:'Liberation Sans',sans-serif;font-size:14.4px;color:#777;">HH:mm:ss</span>
<span class="t" style="left:1406px;top:475px;font-family:'Liberation Sans',sans-serif;font-size:14.4px;color:#777;">yyyy-MM-dd HH:mm:ss</span>
<span class="t" style="left:1810px;top:478px;font-family:'Liberation Sans','WenQuanYi Zen Hei',sans-serif;font-size:12px;text-shadow:1px 0 0 currentColor;color:#fff;">处理报警</span>
<span class="t" style="left:214px;top:530px;font-family:'Liberation Sans','Noto Sans CJK SC',sans-serif;font-size:14px;color:#666;">6</span>
<span class="t" style="left:258px;top:528px;font-family:'Liberation Sans',sans-serif;font-size:14.4px;color:#777;">yyyy-MM-dd HH:mm:ss</span>
<span class="t" style="left:451px;top:526px;font-family:'Liberation Sans','Noto Sans CJK SC',sans-serif;font-size:14px;color:#939393;">缺员报警</span>
<span class="t" style="left:690px;top:526px;font-family:'Liberation Sans','Noto Sans CJK SC',sans-serif;font-size:14px;color:#939393;">报警区域名</span>
<span class="t" style="left:824px;top:526px;font-family:'Liberation Sans','Noto Sans CJK SC',sans-serif;font-size:14px;color:#939393;">缺员报警</span>
<span class="t" style="left:946px;top:530px;font-family:'Liberation Sans','Noto Sans CJK SC',sans-serif;font-size:14px;color:#939393;letter-spacing:.5px;">test</span>
<span class="t" style="left:1089px;top:530px;font-family:'Liberation Sans','Noto Sans CJK SC',sans-serif;font-size:14px;color:#666;">13815</span>
<span class="t" style="left:1204px;top:527px;font-family:'Liberation Sans','Noto Sans CJK SC',sans-serif;font-size:14px;color:#67c23a;">已处理</span>
<span class="t" style="left:1321px;top:525px;font-family:'Liberation Sans',sans-serif;font-size:14.4px;color:#777;">HH:mm:ss</span>
<span class="t" style="left:1406px;top:525px;font-family:'Liberation Sans',sans-serif;font-size:14.4px;color:#777;">yyyy-MM-dd HH:mm:ss</span>
<span class="t" style="left:1810px;top:528px;font-family:'Liberation Sans','WenQuanYi Zen Hei',sans-serif;font-size:12px;text-shadow:1px 0 0 currentColor;color:#fff;">处理报警</span>
<span class="t" style="left:214px;top:580px;font-family:'Liberation Sans','Noto Sans CJK SC',sans-serif;font-size:14px;color:#666;">7</span>
<span class="t" style="left:258px;top:578px;font-family:'Liberation Sans',sans-serif;font-size:14.4px;color:#777;">yyyy-MM-dd HH:mm:ss</span>
<span class="t" style="left:451px;top:576px;font-family:'Liberation Sans','Noto Sans CJK SC',sans-serif;font-size:14px;color:#939393;">超员报警</span>
<span class="t" style="left:690px;top:576px;font-family:'Liberation Sans','Noto Sans CJK SC',sans-serif;font-size:14px;color:#939393;">报警区域名</span>
<span class="t" style="left:824px;top:576px;font-family:'Liberation Sans','Noto Sans CJK SC',sans-serif;font-size:14px;color:#939393;">超员报警</span>
<span class="t" style="left:947px;top:576px;font-family:'Liberation Sans','Noto Sans CJK SC',sans-serif;font-size:14px;color:#939393;letter-spacing:.2px;">test等三人</span>
<span class="t" style="left:1102px;top:582px;font-family:'Liberation Sans',sans-serif;font-size:12px;color:#666;">—</span>
<span class="t" style="left:1204px;top:577px;font-family:'Liberation Sans','Noto Sans CJK SC',sans-serif;font-size:14px;color:#f56c6c;">未处理</span>
<span class="t" style="left:1321px;top:575px;font-family:'Liberation Sans',sans-serif;font-size:14.4px;color:#777;">HH:mm:ss</span>
<span class="t" style="left:1406px;top:575px;font-family:'Liberation Sans',sans-serif;font-size:14.4px;color:#777;">yyyy-MM-dd HH:mm:ss</span>
<span class="t" style="left:1712px;top:578px;font-family:'Liberation Sans','WenQuanYi Zen Hei',sans-serif;font-size:12px;text-shadow:1px 0 0 currentColor;color:#fff;">人员列表</span>
<span class="t" style="left:1810px;top:578px;font-family:'Liberation Sans','WenQuanYi Zen Hei',sans-serif;font-size:12px;text-shadow:1px 0 0 currentColor;color:#fff;">处理报警</span>
<span class="t" style="left:214px;top:630px;font-family:'Liberation Sans','Noto Sans CJK SC',sans-serif;font-size:14px;color:#666;">8</span>
<span class="t" style="left:258px;top:628px;font-family:'Liberation Sans',sans-serif;font-size:14.4px;color:#777;">yyyy-MM-dd HH:mm:ss</span>
<span class="t" style="left:451px;top:626px;font-family:'Liberation Sans','Noto Sans CJK SC',sans-serif;font-size:14px;color:#939393;">聚集报警</span>
<span class="t" style="left:690px;top:626px;font-family:'Liberation Sans','Noto Sans CJK SC',sans-serif;font-size:14px;color:#939393;">报警区域名</span>
<span class="t" style="left:824px;top:626px;font-family:'Liberation Sans','Noto Sans CJK SC',sans-serif;font-size:14px;color:#939393;">聚集报警</span>
<span class="t" style="left:947px;top:626px;font-family:'Liberation Sans','Noto Sans CJK SC',sans-serif;font-size:14px;color:#939393;letter-spacing:.2px;">test等三人</span>
<span class="t" style="left:1102px;top:632px;font-family:'Liberation Sans',sans-serif;font-size:12px;color:#666;">—</span>
<span class="t" style="left:1204px;top:627px;font-family:'Liberation Sans','Noto Sans CJK SC',sans-serif;font-size:14px;color:#67c23a;">已处理</span>
<span class="t" style="left:1321px;top:625px;font-family:'Liberation Sans',sans-serif;font-size:14.4px;color:#777;">HH:mm:ss</span>
<span class="t" style="left:1406px;top:625px;font-family:'Liberation Sans',sans-serif;font-size:14.4px;color:#777;">yyyy-MM-dd HH:mm:ss</span>
<span class="t" style="left:1712px;top:628px;font-family:'Liberation Sans','WenQuanYi Zen Hei',sans-serif;font-size:12px;text-shadow:1px 0 0 currentColor;color:#fff;">人员列表</span>
<span class="t" style="left:214px;top:680px;font-family:'Liberation Sans','Noto Sans CJK SC',sans-serif;font-size:14px;color:#666;">9</span>
<span class="t" style="left:258px;top:678px;font-family:'Liberation Sans',sans-serif;font-size:14.4px;color:#777;">yyyy-MM-dd HH:mm:ss</span>
<span class="t" style="left:451px;top:676px;font-family:'Liberation Sans','Noto Sans CJK SC',sans-serif;font-size:14px;color:#939393;">进入报警</span>
<span class="t" style="left:690px;top:676px;font-family:'Liberation Sans','Noto Sans CJK SC',sans-serif;font-size:14px;color:#939393;">报警区域名</span>
<span class="t" style="left:824px;top:676px;font-family:'Liberation Sans','Noto Sans CJK SC',sans-serif;font-size:14px;color:#939393;">进入报警</span>
<span class="t" style="left:946px;top:680px;font-family:'Liberation Sans','Noto Sans CJK SC',sans-serif;font-size:14px;color:#939393;letter-spacing:.5px;">test</span>
<span class="t" style="left:1089px;top:680px;font-family:'Liberation Sans','Noto Sans CJK SC',sans-serif;font-size:14px;color:#666;">13815</span>
<span class="t" style="left:1204px;top:677px;font-family:'Liberation Sans','Noto Sans CJK SC',sans-serif;font-size:14px;color:#f56c6c;">未处理</span>
<span class="t" style="left:1321px;top:675px;font-family:'Liberation Sans',sans-serif;font-size:14.4px;color:#777;">HH:mm:ss</span>
<span class="t" style="left:1406px;top:675px;font-family:'Liberation Sans',sans-serif;font-size:14.4px;color:#777;">yyyy-MM-dd HH:mm:ss</span>
<span class="t" style="left:1810px;top:678px;font-family:'Liberation Sans','WenQuanYi Zen Hei',sans-serif;font-size:12px;text-shadow:1px 0 0 currentColor;color:#fff;">处理报警</span>
<span class="t" style="left:214px;top:730px;font-family:'Liberation Sans','Noto Sans CJK SC',sans-serif;font-size:14px;color:#666;">10</span>
<span class="t" style="left:258px;top:728px;font-family:'Liberation Sans',sans-serif;font-size:14.4px;color:#777;">yyyy-MM-dd HH:mm:ss</span>
<span class="t" style="left:452px;top:726px;font-family:'Liberation Sans','Noto Sans CJK SC',sans-serif;font-size:14px;color:#939393;">越界报警</span>
<span class="t" style="left:690px;top:726px;font-family:'Liberation Sans','Noto Sans CJK SC',sans-serif;font-size:14px;color:#939393;">报警区域名</span>
<span class="t" style="left:825px;top:726px;font-family:'Liberation Sans','Noto Sans CJK SC',sans-serif;font-size:14px;color:#939393;">越界报警</span>
<span class="t" style="left:946px;top:730px;font-family:'Liberation Sans','Noto Sans CJK SC',sans-serif;font-size:14px;color:#939393;letter-spacing:.5px;">test</span>
<span class="t" style="left:1089px;top:730px;font-family:'Liberation Sans','Noto Sans CJK SC',sans-serif;font-size:14px;color:#666;">13815</span>
<span class="t" style="left:1204px;top:727px;font-family:'Liberation Sans','Noto Sans CJK SC',sans-serif;font-size:14px;color:#67c23a;">已处理</span>
<span class="t" style="left:1321px;top:725px;font-family:'Liberation Sans',sans-serif;font-size:14.4px;color:#777;">HH:mm:ss</span>
<span class="t" style="left:1406px;top:725px;font-family:'Liberation Sans',sans-serif;font-size:14.4px;color:#777;">yyyy-MM-dd HH:mm:ss</span>
<span class="t" style="left:214px;top:780px;font-family:'Liberation Sans','Noto Sans CJK SC',sans-serif;font-size:14px;color:#666;">11</span>
<span class="t" style="left:258px;top:778px;font-family:'Liberation Sans',sans-serif;font-size:14.4px;color:#777;">yyyy-MM-dd HH:mm:ss</span>
<span class="t" style="left:451px;top:776px;font-family:'Liberation Sans','Noto Sans CJK SC',sans-serif;font-size:14px;color:#939393;">滞留报警</span>
<span class="t" style="left:690px;top:776px;font-family:'Liberation Sans','Noto Sans CJK SC',sans-serif;font-size:14px;color:#939393;">报警区域名</span>
<span class="t" style="left:824px;top:776px;font-family:'Liberation Sans','Noto Sans CJK SC',sans-serif;font-size:14px;color:#939393;">滞留报警</span>
<span class="t" style="left:946px;top:780px;font-family:'Liberation Sans','Noto Sans CJK SC',sans-serif;font-size:14px;color:#939393;letter-spacing:.5px;">test</span>
<span class="t" style="left:1089px;top:780px;font-family:'Liberation Sans','Noto Sans CJK SC',sans-serif;font-size:14px;color:#666;">13815</span>
<span class="t" style="left:1204px;top:777px;font-family:'Liberation Sans','Noto Sans CJK SC',sans-serif;font-size:14px;color:#f56c6c;">未处理</span>
<span class="t" style="left:1321px;top:775px;font-family:'Liberation Sans',sans-serif;font-size:14.4px;color:#777;">HH:mm:ss</span>
<span class="t" style="left:1406px;top:775px;font-family:'Liberation Sans',sans-serif;font-size:14.4px;color:#777;">yyyy-MM-dd HH:mm:ss</span>
<span class="t" style="left:1810px;top:778px;font-family:'Liberation Sans','WenQuanYi Zen Hei',sans-serif;font-size:12px;text-shadow:1px 0 0 currentColor;color:#fff;">处理报警</span>
<span class="t" style="left:214px;top:830px;font-family:'Liberation Sans','Noto Sans CJK SC',sans-serif;font-size:14px;color:#666;">12</span>
<span class="t" style="left:258px;top:828px;font-family:'Liberation Sans',sans-serif;font-size:14.4px;color:#777;">yyyy-MM-dd HH:mm:ss</span>
<span class="t" style="left:451px;top:826px;font-family:'Liberation Sans','Noto Sans CJK SC',sans-serif;font-size:14px;color:#939393;">静止报警</span>
<span class="t" style="left:690px;top:826px;font-family:'Liberation Sans','Noto Sans CJK SC',sans-serif;font-size:14px;color:#939393;">报警区域名</span>
<span class="t" style="left:824px;top:826px;font-family:'Liberation Sans','Noto Sans CJK SC',sans-serif;font-size:14px;color:#939393;">静止报警</span>
<span class="t" style="left:946px;top:830px;font-family:'Liberation Sans','Noto Sans CJK SC',sans-serif;font-size:14px;color:#939393;letter-spacing:.5px;">test</span>
<span class="t" style="left:1089px;top:830px;font-family:'Liberation Sans','Noto Sans CJK SC',sans-serif;font-size:14px;color:#666;">13815</span>
<span class="t" style="left:1204px;top:827px;font-family:'Liberation Sans','Noto Sans CJK SC',sans-serif;font-size:14px;color:#67c23a;">已处理</span>
<span class="t" style="left:1321px;top:825px;font-family:'Liberation Sans',sans-serif;font-size:14.4px;color:#777;">HH:mm:ss</span>
<span class="t" style="left:1406px;top:825px;font-family:'Liberation Sans',sans-serif;font-size:14.4px;color:#777;">yyyy-MM-dd HH:mm:ss</span>
<span class="t" style="left:214px;top:880px;font-family:'Liberation Sans','Noto Sans CJK SC',sans-serif;font-size:14px;color:#666;">13</span>
<span class="t" style="left:258px;top:878px;font-family:'Liberation Sans',sans-serif;font-size:14.4px;color:#777;">yyyy-MM-dd HH:mm:ss</span>
<span class="t" style="left:451px;top:876px;font-family:'Liberation Sans','Noto Sans CJK SC',sans-serif;font-size:14px;color:#939393;">缺员报警</span>
<span class="t" style="left:690px;top:876px;font-family:'Liberation Sans','Noto Sans CJK SC',sans-serif;font-size:14px;color:#939393;">报警区域名</span>
<span class="t" style="left:824px;top:876px;font-family:'Liberation Sans','Noto Sans CJK SC',sans-serif;font-size:14px;color:#939393;">缺员报警</span>
<span class="t" style="left:946px;top:880px;font-family:'Liberation Sans','Noto Sans CJK SC',sans-serif;font-size:14px;color:#939393;letter-spacing:.5px;">test</span>
<span class="t" style="left:1089px;top:880px;font-family:'Liberation Sans','Noto Sans CJK SC',sans-serif;font-size:14px;color:#666;">13815</span>
<span class="t" style="left:1204px;top:877px;font-family:'Liberation Sans','Noto Sans CJK SC',sans-serif;font-size:14px;color:#f56c6c;">未处理</span>
<span class="t" style="left:1321px;top:875px;font-family:'Liberation Sans',sans-serif;font-size:14.4px;color:#777;">HH:mm:ss</span>
<span class="t" style="left:1406px;top:875px;font-family:'Liberation Sans',sans-serif;font-size:14.4px;color:#777;">yyyy-MM-dd HH:mm:ss</span>
<span class="t" style="left:1810px;top:878px;font-family:'Liberation Sans','WenQuanYi Zen Hei',sans-serif;font-size:12px;text-shadow:1px 0 0 currentColor;color:#fff;">处理报警</span>
<span class="t" style="left:214px;top:930px;font-family:'Liberation Sans','Noto Sans CJK SC',sans-serif;font-size:14px;color:#666;">14</span>
<span class="t" style="left:258px;top:928px;font-family:'Liberation Sans',sans-serif;font-size:14.4px;color:#777;">yyyy-MM-dd HH:mm:ss</span>
<span class="t" style="left:451px;top:926px;font-family:'Liberation Sans','Noto Sans CJK SC',sans-serif;font-size:14px;color:#939393;">超员报警</span>
<span class="t" style="left:690px;top:926px;font-family:'Liberation Sans','Noto Sans CJK SC',sans-serif;font-size:14px;color:#939393;">报警区域名</span>
<span class="t" style="left:824px;top:926px;font-family:'Liberation Sans','Noto Sans CJK SC',sans-serif;font-size:14px;color:#939393;">超员报警</span>
<span class="t" style="left:947px;top:926px;font-family:'Liberation Sans','Noto Sans CJK SC',sans-serif;font-size:14px;color:#939393;letter-spacing:.2px;">test等三人</span>
<span class="t" style="left:1102px;top:932px;font-family:'Liberation Sans',sans-serif;font-size:12px;color:#666;">—</span>
<span class="t" style="left:1204px;top:927px;font-family:'Liberation Sans','Noto Sans CJK SC',sans-serif;font-size:14px;color:#67c23a;">已处理</span>
<span class="t" style="left:1321px;top:925px;font-family:'Liberation Sans',sans-serif;font-size:14.4px;color:#777;">HH:mm:ss</span>
<span class="t" style="left:1406px;top:925px;font-family:'Liberation Sans',sans-serif;font-size:14.4px;color:#777;">yyyy-MM-dd HH:mm:ss</span>
<span class="t" style="left:1712px;top:928px;font-family:'Liberation Sans','WenQuanYi Zen Hei',sans-serif;font-size:12px;text-shadow:1px 0 0 currentColor;color:#fff;">人员列表</span>
<span class="t" style="left:1810px;top:928px;font-family:'Liberation Sans','WenQuanYi Zen Hei',sans-serif;font-size:12px;text-shadow:1px 0 0 currentColor;color:#fff;">处理报警</span>
<span class="t" style="left:1063px;top:1018px;font-family:'Liberation Sans','WenQuanYi Zen Hei',sans-serif;color:#1a1a1a;font-size:13px;letter-spacing:.6px;">共100条</span>
<span class="t" style="left:1145px;top:1018px;font-family:'Liberation Sans','WenQuanYi Zen Hei',sans-serif;color:#1a1a1a;font-size:13px;letter-spacing:.6px;">每页</span>
<span class="t" style="left:1194px;top:1019px;font-family:'Liberation Sans','WenQuanYi Zen Hei',sans-serif;color:#3c3c3c;font-size:16px;letter-spacing:-.6px;">20</span>
<span class="t" style="left:1246px;top:1017px;font-family:'Liberation Sans','WenQuanYi Zen Hei',sans-serif;color:#1a1a1a;font-size:13px;">条</span>
<span class="t" style="left:1308px;top:1019px;font-family:'Liberation Sans','WenQuanYi Zen Hei',sans-serif;color:#3c3c3c;font-size:12px;">{</span>
<span class="t" style="left:1345px;top:1020px;font-family:'Liberation Sans','WenQuanYi Zen Hei',sans-serif;color:#3c3c3c;font-size:16px;">1</span>
<span class="t" style="left:1386px;top:1020px;font-family:'Liberation Sans','WenQuanYi Zen Hei',sans-serif;color:#3c3c3c;font-size:16px;">2</span>
<span class="t" style="left:1428px;top:1020px;font-family:'Liberation Sans','WenQuanYi Zen Hei',sans-serif;color:#3c3c3c;font-size:16px;">3</span>
<span class="t" style="left:1470px;top:1020px;font-family:'Liberation Sans','WenQuanYi Zen Hei',sans-serif;color:#3c3c3c;font-size:16px;">4</span>
<span class="t" style="left:1513px;top:1020px;font-family:'Liberation Sans','WenQuanYi Zen Hei',sans-serif;color:#3c3c3c;font-size:16px;">5</span>
<span class="t" style="left:1554px;top:1023px;font-family:'Liberation Sans','WenQuanYi Zen Hei',sans-serif;color:#1a1a1a;font-size:10px;font-weight:bold;letter-spacing:.4px;">······</span>
<span class="t" style="left:1609px;top:1020px;font-family:'Liberation Sans','WenQuanYi Zen Hei',sans-serif;color:#3c3c3c;font-size:16px;letter-spacing:-.7px;">100</span>
<span class="t" style="left:1668px;top:1019px;font-family:'Liberation Sans','WenQuanYi Zen Hei',sans-serif;color:#3c3c3c;font-size:12px;">}</span>
<span class="t" style="left:1723px;top:1020px;font-family:'Liberation Sans','WenQuanYi Zen Hei',sans-serif;color:#1a1a1a;font-size:14px;">前往</span>
<span class="t" style="left:1851px;top:1018px;font-family:'Liberation Sans','WenQuanYi Zen Hei',sans-serif;color:#1a1a1a;font-size:13px;">页</span>
</div>
</body>
</html>
